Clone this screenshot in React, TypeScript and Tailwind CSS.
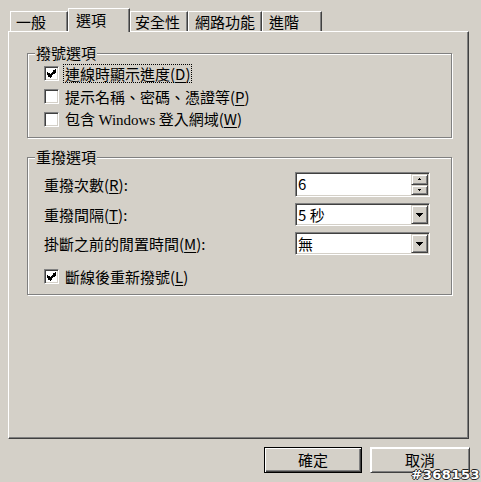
import React from "react";

function Check({ checked }: { checked?: boolean }) {
  return (
    <span className="w-[15px] h-[15px] shrink-0 bg-white border border-t-[#808080] border-l-[#808080] border-b-white border-r-white shadow-[inset_1px_1px_0_#404040,inset_-1px_-1px_0_#d4d0c8] flex items-center justify-center">
      {checked && (
        <svg width="9" height="9" viewBox="0 0 7 7" shapeRendering="crispEdges">
          <path d="M0 2h1v1h1v1h1v-1h1v-1h1v-1h1v-1h1v3h-1v1h-1v1h-1v1h-1v1h-1v-1h-1v-1h-1v-1h-1z" fill="#000" />
        </svg>
      )}
    </span>
  );
}

function Tab({ label, w, pl, selected }: { label: string; w: string; pl: string; selected?: boolean }) {
  return (
    <div
      className={
        selected
          ? `${w} h-[24px] -mb-[1px] relative z-10 bg-[#d4d0c8] border-t border-l border-white border-r border-r-[#404040] shadow-[inset_-1px_0_0_#808080] ${pl} pt-[2px] leading-[18px]`
          : `${w} h-[20px] bg-[#d4d0c8] border-t border-l border-white border-r border-r-[#404040] shadow-[inset_-1px_0_0_#808080] ${pl} pt-[1px] leading-[18px]`
      }
    >
      {label}
    </div>
  );
}

function Group({ title, className, children }: { title: string; className: string; children: React.ReactNode }) {
  return (
    <div className={`relative w-[425px] border border-[#808080] shadow-[inset_1px_1px_0_#fff,1px_1px_0_#fff] ${className}`}>
      <span className="absolute left-[7px] -top-[10px] px-[1px] bg-[#d4d0c8] leading-[18px]">{title}</span>
      {children}
    </div>
  );
}

function U({ c }: { c: string }) {
  return <span className="underline underline-offset-2">{c}</span>;
}

const sunken =
  "bg-white border border-t-[#808080] border-l-[#808080] border-b-white border-r-white shadow-[inset_1px_1px_0_#404040,inset_-1px_-1px_0_#d4d0c8]";
const raised =
  "bg-[#d4d0c8] border border-t-[#d4d0c8] border-l-[#d4d0c8] border-b-[#404040] border-r-[#404040] shadow-[inset_1px_1px_0_#fff,inset_-1px_-1px_0_#808080]";

function Combo({ value }: { value: string }) {
  return (
    <div className={`w-[135px] h-[23px] flex items-stretch p-[1px] ${sunken}`}>
      <span className="flex-1 pl-[1px] leading-[19px]">{value}</span>
      <span className={`w-[17px] flex items-center justify-center ${raised}`}>
        <svg width="7" height="4" viewBox="0 0 7 4" shapeRendering="crispEdges">
          <path d="M0 0h7l-3.5 4z" fill="#000" />
        </svg>
      </span>
    </div>
  );
}

function Spin({ value }: { value: string }) {
  return (
    <div className={`w-[135px] h-[25px] flex items-stretch p-[1px] ${sunken}`}>
      <span className="flex-1 pl-[1px] leading-[19px]">{value}</span>
      <span className="w-[17px] flex flex-col">
        <span className={`flex-1 flex items-center justify-center ${raised}`}>
          <svg width="3" height="2" viewBox="0 0 3 2" shapeRendering="crispEdges">
            <path d="M1 0h1v1h1v1h-3v-1h1z" fill="#000" />
          </svg>
        </span>
        <span className={`flex-1 flex items-center justify-center ${raised}`}>
          <svg width="3" height="2" viewBox="0 0 3 2" shapeRendering="crispEdges">
            <path d="M0 0h3v1h-1v1h-1v-1h-1z" fill="#000" />
          </svg>
        </span>
      </span>
    </div>
  );
}

export default function App() {
  return (
    <div className="relative w-[481px] h-[482px] overflow-hidden bg-[#d4d0c8] text-black text-[15px] leading-[18px] font-['Noto_Sans_CJK_TC',sans-serif] pt-[8px]">
      <div className="flex items-end h-[23px] pl-[10px] relative z-10">
        <Tab label="一般" w="w-[58px]" pl="pl-[5px]" />
        <Tab label="選項" w="w-[62px]" pl="pl-[7px]" selected />
        <Tab label="安全性" w="w-[58px]" pl="pl-[4px]" />
        <Tab label="網路功能" w="w-[74px]" pl="pl-[6px]" />
        <Tab label="進階" w="w-[60px]" pl="pl-[6px]" />
      </div>
      <div className="ml-[8px] w-[461px] h-[408px] border-l border-t border-white border-r border-b border-r-[#404040] border-b-[#404040] shadow-[inset_-1px_-1px_0_#808080] pt-[21px] pl-[18px]">
        <Group title="撥號選項" className="h-[85px] pt-[8px] pl-[16px]">
          <div className="flex flex-col">
            <label className="h-[23px] flex items-center gap-[4px]">
              <Check checked />
              <span className="border border-dotted border-black px-[1px] leading-[17px]">
                連線時顯示進度(<U c="D" />)
              </span>
            </label>
            <label className="h-[23px] flex items-center gap-[6px]">
              <Check />
              <span>
                提示名稱、密碼、憑證等(<U c="P" />)
              </span>
            </label>
            <label className="h-[23px] flex items-center gap-[6px]">
              <Check />
              <span>
                包含 <span className="font-['Liberation_Serif','Noto_Sans_CJK_TC',serif]">Windows</span> 登入網域(<U c="W" />)
              </span>
            </label>
          </div>
        </Group>
        <Group title="重撥選項" className="h-[138px] mt-[19px] pt-[14px] pl-[16px] pr-[21px]">
          <div className="flex flex-col">
            <div className="flex items-center justify-between">
              <span>
                重撥次數(<U c="R" />):
              </span>
              <Spin value="6" />
            </div>
            <div className="flex items-center justify-between mt-[6px]">
              <span>
                重撥間隔(<U c="T" />):
              </span>
              <Combo value="5 秒" />
            </div>
            <div className="flex items-center justify-between mt-[6px]">
              <span>
                掛斷之前的閒置時間(<U c="M" />):
              </span>
              <Combo value="無" />
            </div>
            <label className="h-[23px] mt-[10px] flex items-center gap-[6px]">
              <Check checked />
              <span>
                斷線後重新撥號(<U c="L" />)
              </span>
            </label>
          </div>
        </Group>
      </div>
      <div className="flex justify-end gap-[8px] pr-[11px] mt-[8px]">
        <button className="w-[98px] h-[26px] border border-black bg-[#d4d0c8] shadow-[inset_1px_1px_0_#fff,inset_-1px_-1px_0_#404040,inset_-2px_-2px_0_#808080] leading-[18px]">
          確定
        </button>
        <button className={`w-[100px] h-[26px] leading-[18px] ${raised} border-t-white border-l-white`}>
          取消
        </button>
      </div>
      <span className="absolute right-[1px] bottom-[0px] text-[13px] leading-[14px] tracking-[0.5px] font-bold text-white font-['DejaVu_Sans',sans-serif] [text-shadow:1px_0_#222,-1px_0_#222,0_1px_#222,0_-1px_#222]">
        #368153
      </span>
    </div>
  );
}
